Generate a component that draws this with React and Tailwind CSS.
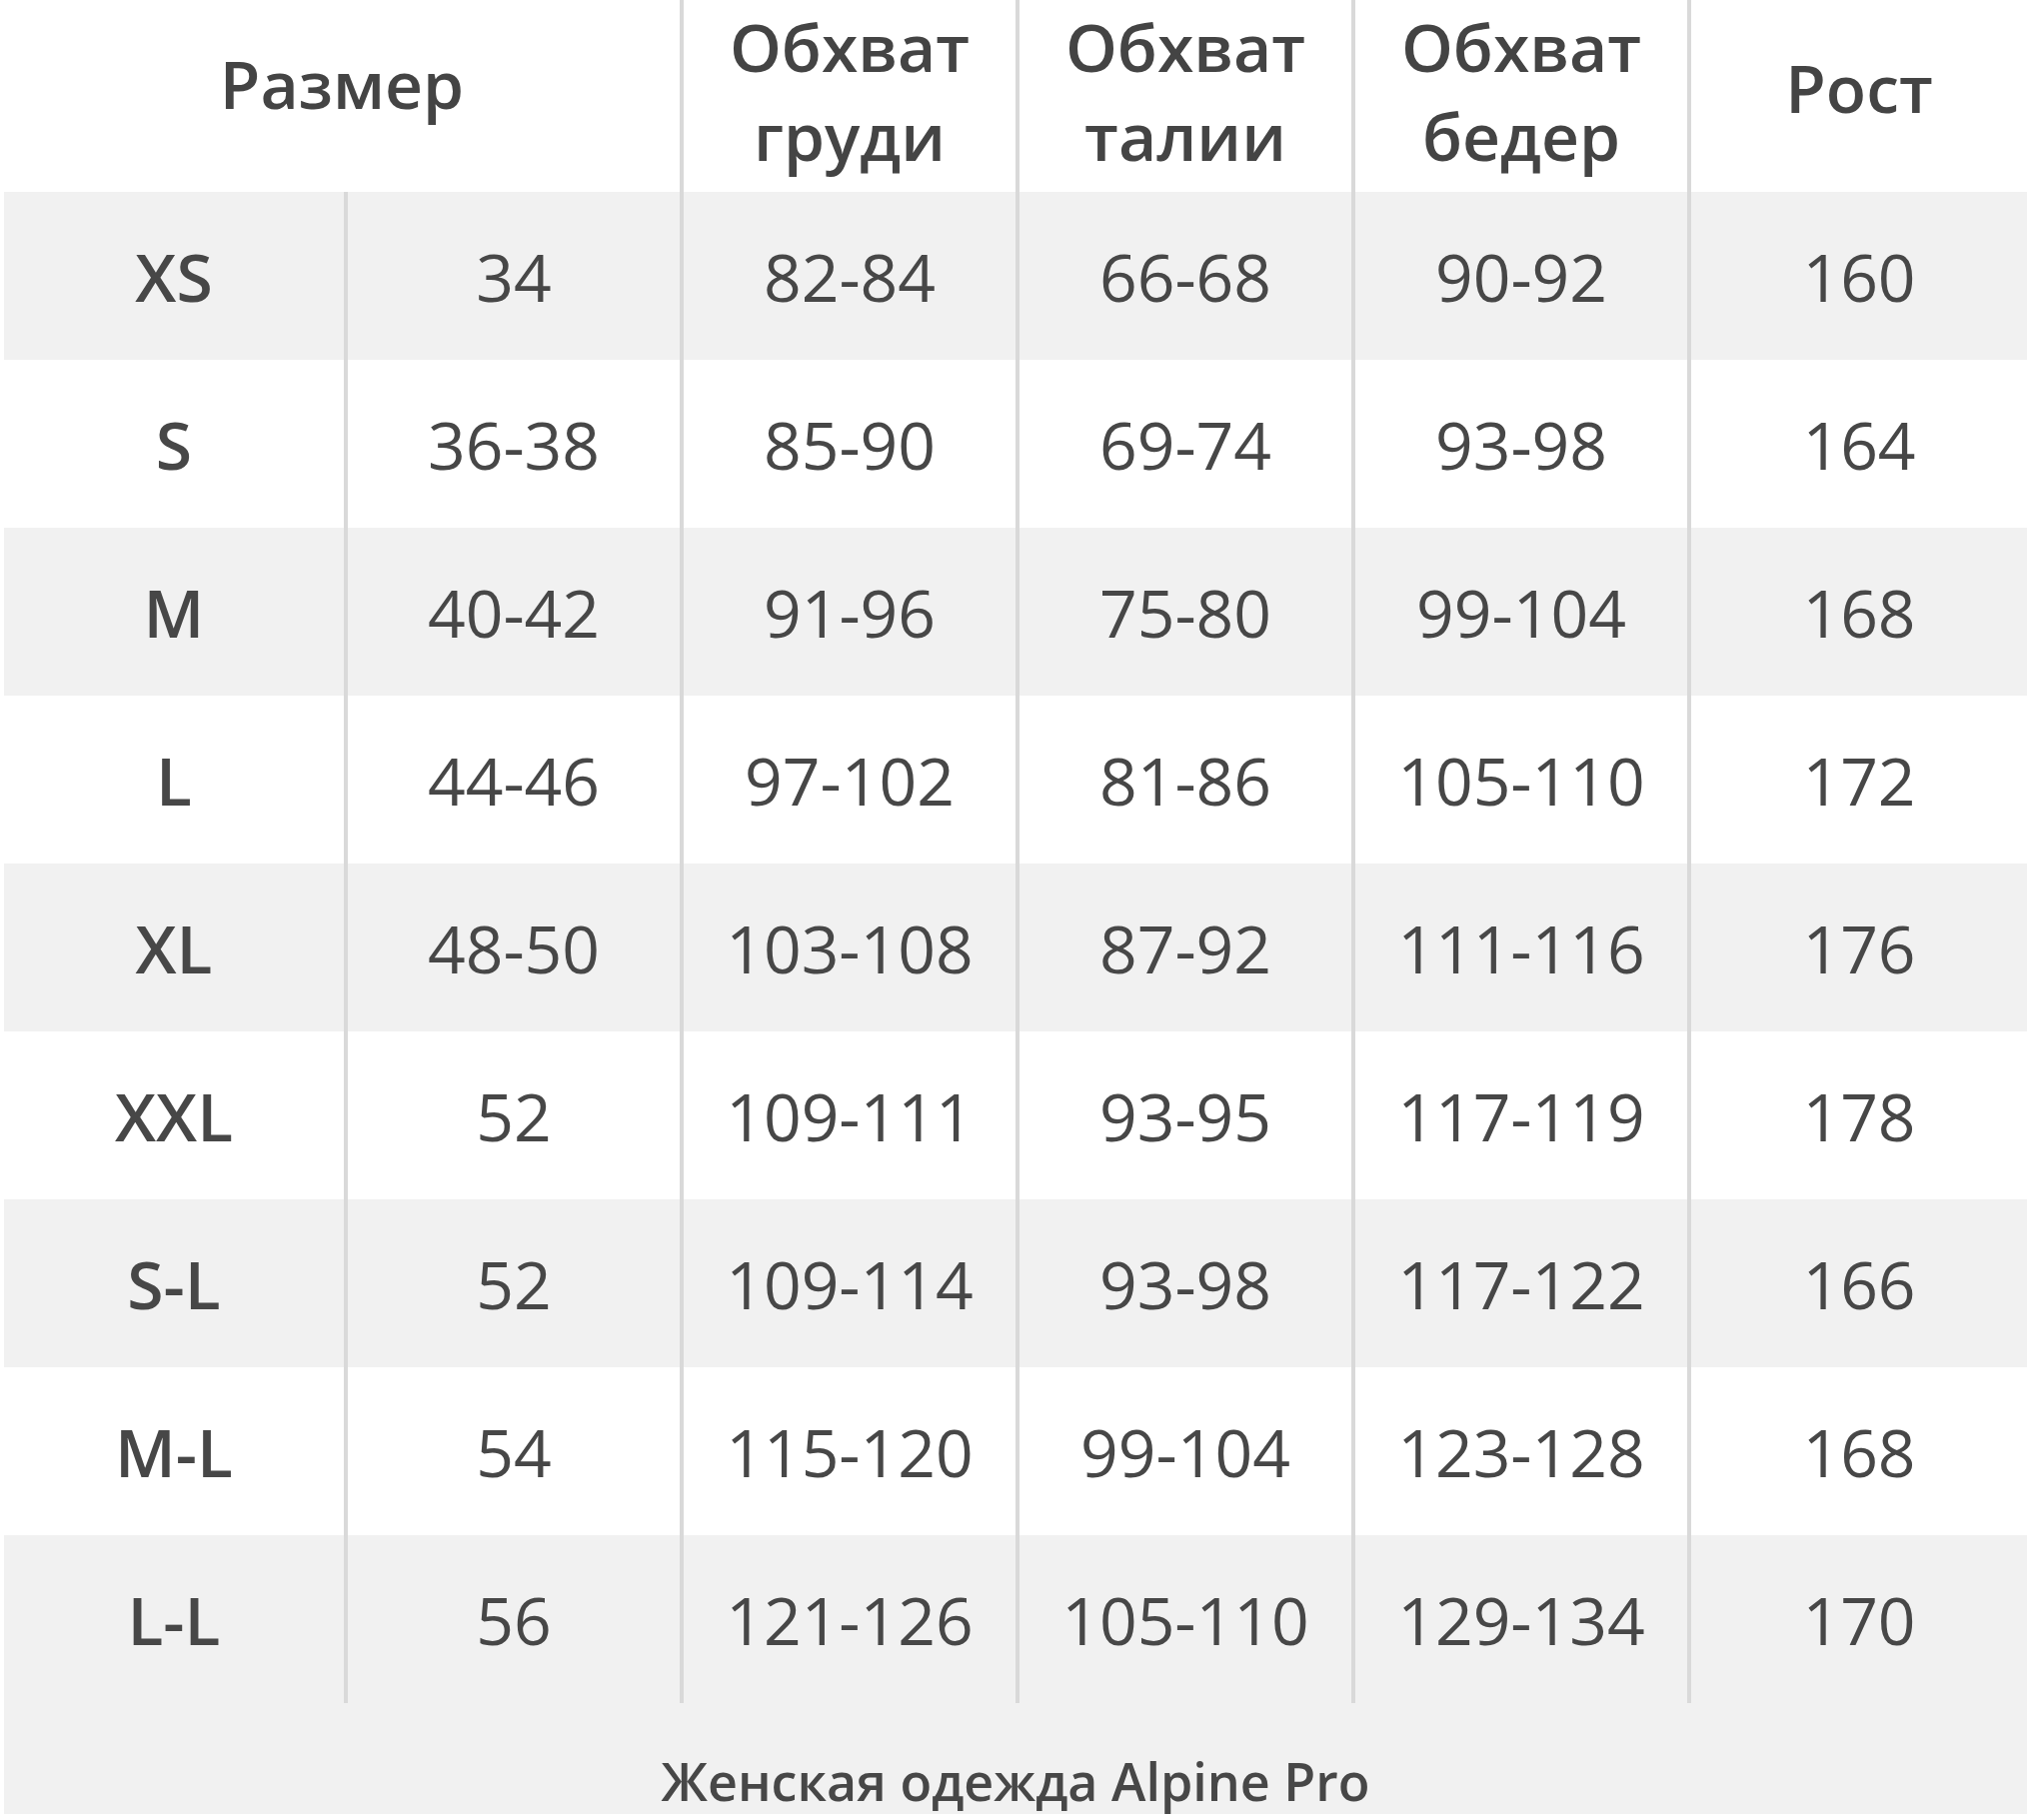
import React from "react";

const rows = [
  ["XS", "34", "82-84", "66-68", "90-92", "160"],
  ["S", "36-38", "85-90", "69-74", "93-98", "164"],
  ["M", "40-42", "91-96", "75-80", "99-104", "168"],
  ["L", "44-46", "97-102", "81-86", "105-110", "172"],
  ["XL", "48-50", "103-108", "87-92", "111-116", "176"],
  ["XXL", "52", "109-111", "93-95", "117-119", "178"],
  ["S-L", "52", "109-114", "93-98", "117-122", "166"],
  ["M-L", "54", "115-120", "99-104", "123-128", "168"],
  ["L-L", "56", "121-126", "105-110", "129-134", "170"],
];

const font = { fontFamily: '"Open Sans", "Noto Sans", sans-serif' };

function TwoLine({ a, b }) {
  return (
    <div className="border-l-4 border-[#d9d9d9] flex items-center justify-center text-center">
      <div className="-mt-[12px] flex flex-col items-center gap-[23px]">
        <span>{a}</span>
        <span>{b}</span>
      </div>
    </div>
  );
}

export default function App() {
  return (
    <div className="w-[2030px] h-[1821px] bg-white pl-[4px] text-[#474747]" style={font}>
      <div className="w-[2024px]">
        <div className="grid grid-cols-[340px_336px_336px_336px_336px_340px] grid-rows-[192px] h-[192px] bg-white font-semibold text-[66px] text-[#444444] leading-none">
          <div className="col-span-2 flex items-center justify-center">
            <div className="-mt-[27px]">Размер</div>
          </div>
          <TwoLine a="Обхват" b="груди" />
          <TwoLine a="Обхват" b="талии" />
          <TwoLine a="Обхват" b="бедер" />
          <div className="border-l-4 border-[#d9d9d9] flex items-center justify-center text-center">
            <div className="-mt-[19px]">Рост</div>
          </div>
        </div>
        {rows.map((r, i) => (
          <div
            key={i}
            className={
              "grid grid-cols-[340px_336px_336px_336px_336px_340px] h-[168px] text-[66px] " +
              (i % 2 === 0 ? "bg-[#f1f1f1]" : "bg-white")
            }
          >
            {r.map((c, j) => (
              <div
                key={j}
                className={
                  "flex items-center justify-center leading-none " +
                  (j === 0 ? "font-semibold" : "font-normal border-l-4 border-[#d9d9d9]")
                }
              >
                {c}
              </div>
            ))}
          </div>
        ))}
        <div className="bg-[#f1f1f1] h-[111px] pt-[52px] text-center text-[52px] font-semibold leading-none">
          Женская одежда Alpine Pro
        </div>
      </div>
    </div>
  );
}
